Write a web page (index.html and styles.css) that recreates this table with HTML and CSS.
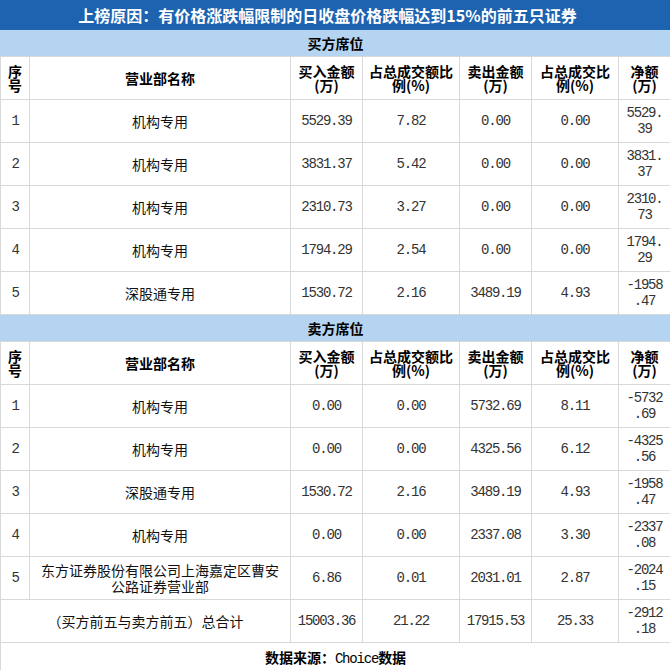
FILE: index.html
```html
<!DOCTYPE html>
<html lang="zh-CN">
<head>
<meta charset="utf-8">
<title>龙虎榜</title>
<link rel="stylesheet" href="styles.css">
</head>
<body>
<table class="lhb">
  <colgroup>
    <col class="c-no"><col class="c-name"><col class="c-buy"><col class="c-buyr"><col class="c-sell"><col class="c-sellr"><col class="c-net">
  </colgroup>
  <tbody>
    <tr class="title-row"><td colspan="7">上榜原因：有价格涨跌幅限制的日收盘价格跌幅达到15%的前五只证券</td></tr>
    <tr class="section-row"><td colspan="7">买方席位</td></tr>
    <tr class="head-row">
      <td>序<br>号</td><td>营业部名称</td><td>买入金额<br>(万)</td><td>占总成交额比<br>例(%)</td><td>卖出金额<br>(万)</td><td>占总成交比<br>例(%)</td><td>净额<br>(万)</td>
    </tr>
    <tr class="data-row"><td class="num">1</td><td class="name">机构专用</td><td class="num">5529.39</td><td class="num">7.82</td><td class="num">0.00</td><td class="num">0.00</td><td class="num net">5529.<br>39</td></tr>
    <tr class="data-row"><td class="num">2</td><td class="name">机构专用</td><td class="num">3831.37</td><td class="num">5.42</td><td class="num">0.00</td><td class="num">0.00</td><td class="num net">3831.<br>37</td></tr>
    <tr class="data-row"><td class="num">3</td><td class="name">机构专用</td><td class="num">2310.73</td><td class="num">3.27</td><td class="num">0.00</td><td class="num">0.00</td><td class="num net">2310.<br>73</td></tr>
    <tr class="data-row"><td class="num">4</td><td class="name">机构专用</td><td class="num">1794.29</td><td class="num">2.54</td><td class="num">0.00</td><td class="num">0.00</td><td class="num net">1794.<br>29</td></tr>
    <tr class="data-row"><td class="num">5</td><td class="name">深股通专用</td><td class="num">1530.72</td><td class="num">2.16</td><td class="num">3489.19</td><td class="num">4.93</td><td class="num net">-1958<br>.47</td></tr>
    <tr class="section-row"><td colspan="7">卖方席位</td></tr>
    <tr class="head-row">
      <td>序<br>号</td><td>营业部名称</td><td>买入金额<br>(万)</td><td>占总成交额比<br>例(%)</td><td>卖出金额<br>(万)</td><td>占总成交比<br>例(%)</td><td>净额<br>(万)</td>
    </tr>
    <tr class="data-row"><td class="num">1</td><td class="name">机构专用</td><td class="num">0.00</td><td class="num">0.00</td><td class="num">5732.69</td><td class="num">8.11</td><td class="num net">-5732<br>.69</td></tr>
    <tr class="data-row"><td class="num">2</td><td class="name">机构专用</td><td class="num">0.00</td><td class="num">0.00</td><td class="num">4325.56</td><td class="num">6.12</td><td class="num net">-4325<br>.56</td></tr>
    <tr class="data-row"><td class="num">3</td><td class="name">深股通专用</td><td class="num">1530.72</td><td class="num">2.16</td><td class="num">3489.19</td><td class="num">4.93</td><td class="num net">-1958<br>.47</td></tr>
    <tr class="data-row"><td class="num">4</td><td class="name">机构专用</td><td class="num">0.00</td><td class="num">0.00</td><td class="num">2337.08</td><td class="num">3.30</td><td class="num net">-2337<br>.08</td></tr>
    <tr class="data-row"><td class="num">5</td><td class="name long">东方证券股份有限公司上海嘉定区曹安公路证券营业部</td><td class="num">6.86</td><td class="num">0.01</td><td class="num">2031.01</td><td class="num">2.87</td><td class="num net">-2024<br>.15</td></tr>
    <tr class="data-row"><td class="name" colspan="2">（买方前五与卖方前五）总合计</td><td class="num">15003.36</td><td class="num">21.22</td><td class="num">17915.53</td><td class="num">25.33</td><td class="num net">-2912<br>.18</td></tr>
    <tr class="foot-row"><td colspan="7">数据来源：<span class="mono">Choice</span>数据</td></tr>
  </tbody>
</table>
</body>
</html>
```

FILE: styles.css
```css
html, body {
  margin: 0;
  padding: 0;
  background: #ffffff;
}

.lhb {
  width: 670px;
  border-collapse: collapse;
  table-layout: fixed;
  font-family: "Noto Sans CJK SC", "Noto Sans", sans-serif;
  font-size: 14px;
  color: #1a1a1a;
}

.c-no { width: 29px; }
.c-name { width: 261px; }
.c-buy { width: 72px; }
.c-buyr { width: 97px; }
.c-sell { width: 72px; }
.c-sellr { width: 87px; }
.c-net { width: 52px; }

.lhb td {
  border: 1px solid #d8d8d8;
  text-align: center;
  vertical-align: middle;
  padding: 0 2px;
  overflow: hidden;
}

.title-row td {
  height: 28px;
  background: #1d63b0;
  border-color: #1d63b0;
  color: #ffffff;
  font-weight: bold;
  font-size: 16px;
  line-height: 20px;
  padding: 0 16px 0 0;
}

.section-row td {
  height: 26px;
  background: #b5d4f1;
  border-color: #b5d4f1 #b5d4f1 #d8d8d8 #b5d4f1;
  font-weight: bold;
  font-size: 14px;
  line-height: 18px;
  color: #000;
  padding: 0;
}

.head-row td {
  height: 42px;
  font-weight: bold;
  font-size: 14px;
  line-height: 14px;
  color: #000;
  padding: 0;
}

.data-row td {
  height: 42px;
  line-height: 16px;
}

.num {
  font-family: "Liberation Mono", "DejaVu Sans Mono", monospace;
  font-size: 14px;
  letter-spacing: -1.2px;
  color: #333;
}

.net {
  padding: 0 !important;
}

.name {
  color: #111;
}

.long {
  line-height: 15px;
  padding: 0 8px !important;
}

.foot-row td {
  height: 27px;
  font-weight: bold;
  font-size: 14px;
  color: #000;
  padding: 0;
}

.mono {
  font-family: "Liberation Mono", monospace;
  font-weight: normal;
  letter-spacing: -1.2px;
}
```
